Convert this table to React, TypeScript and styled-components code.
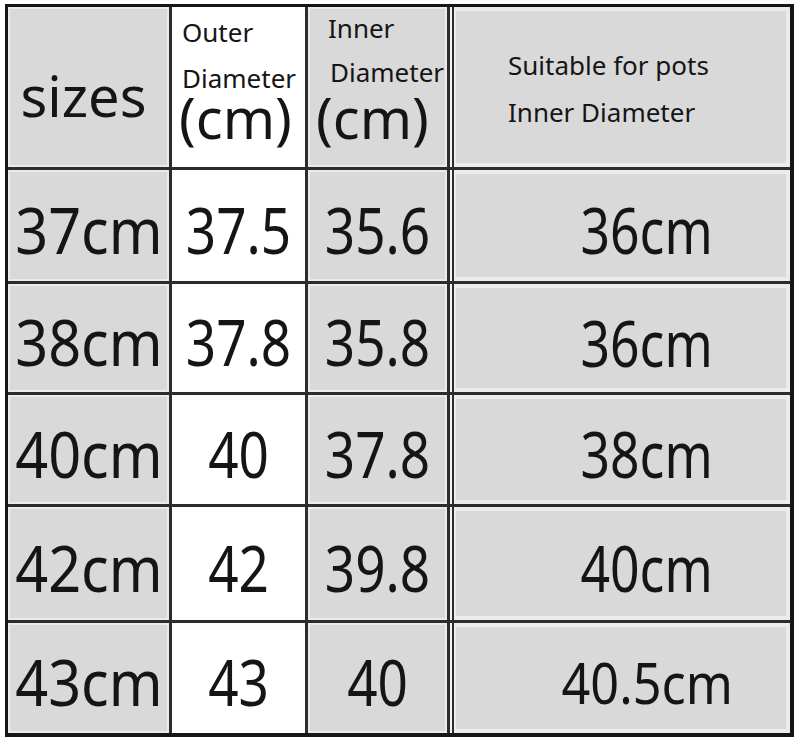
import React from "react";
import styled, { createGlobalStyle } from "styled-components";

const GlobalStyle = createGlobalStyle`
  html, body {
    margin: 0;
    padding: 0;
    background: #ffffff;
  }
  body {
    font-family: "Noto Sans", "Open Sans", sans-serif;
    color: #151515;
  }
`;

const Page = styled.div`
  width: 800px;
  height: 747px;
  box-sizing: border-box;
  padding: 4px 0 0 5px;
  overflow: hidden;
`;

const Table = styled.div`
  display: grid;
  width: 789px;
  box-sizing: border-box;
  grid-template-columns: 161px 133px 139px 1fr;
  grid-template-rows: 160px 111px 108px 109px 113px 110px;
  gap: 3px;
  background: #2c2c2c;
  border-style: solid;
  border-color: #161616;
  border-width: 3px 4px 4px 3px;
`;

type Tone = "gray" | "white";

const Cell = styled.div<{ $tone: Tone; $double?: boolean }>`
  position: relative;
  min-width: 0;
  overflow: hidden;
  background: ${(p) => (p.$tone === "white" ? "#ffffff" : "#d9d9d9")};
  border-left: ${(p) => (p.$double ? "2px solid #f2f2f2" : "0")};
  box-shadow: ${(p) =>
    p.$double
      ? "inset 2px 0 0 #2c2c2c, inset 0 0 0 4px #ececec"
      : `inset 0 0 0 2px ${p.$tone === "white" ? "#ffffff" : "#ebebeb"}`};
`;

const SizesHead = styled(Cell)`
  display: flex;
  align-items: center;
  justify-content: center;
  padding: 16px 10px 0 0;
  font-size: 56px;
  line-height: 1;
`;

const HeadStack = styled(Cell)<{ $top: number; $left: number }>`
  display: flex;
  flex-direction: column;
  align-items: flex-start;
  padding: ${(p) => p.$top}px 0 0 ${(p) => p.$left}px;
`;

const SmallLine = styled.span<{ $lh?: number; $shift?: number }>`
  font-size: 26px;
  line-height: ${(p) => p.$lh ?? 46}px;
  margin-left: ${(p) => p.$shift ?? 0}px;
  white-space: nowrap;
`;

const Unit = styled.span<{ $pull: number; $shift: number }>`
  font-size: 56px;
  line-height: 56px;
  margin: ${(p) => p.$pull}px 0 0 ${(p) => p.$shift}px;
  white-space: nowrap;
`;

const BodyCell = styled(Cell)<{ $indent?: number }>`
  display: flex;
  align-items: center;
  justify-content: center;
  padding: 8px 0 0 ${(p) => p.$indent ?? 0}px;
`;

const Value = styled.span<{ $size: number; $squeeze: number }>`
  display: inline-block;
  font-size: ${(p) => p.$size}px;
  line-height: 1;
  white-space: nowrap;
  transform: scaleX(${(p) => p.$squeeze});
`;

type Row = {
  size: string;
  outer: string;
  inner: string;
  pot: string;
  potSize?: number;
  potSqueeze?: number;
};

const rows: Row[] = [
  { size: "37cm", outer: "37.5", inner: "35.6", pot: "36cm" },
  { size: "38cm", outer: "37.8", inner: "35.8", pot: "36cm" },
  { size: "40cm", outer: "40", inner: "37.8", pot: "38cm" },
  { size: "42cm", outer: "42", inner: "39.8", pot: "40cm" },
  { size: "43cm", outer: "43", inner: "40", pot: "40.5cm", potSize: 56, potSqueeze: 0.9 },
];

export default function App() {
  return (
    <>
      <GlobalStyle />
      <Page>
        <Table>
          <SizesHead $tone="gray">sizes</SizesHead>
          <HeadStack $tone="white" $top={2} $left={10}>
            <SmallLine>Outer</SmallLine>
            <SmallLine>Diameter</SmallLine>
            <Unit $pull={-12} $shift={-3}>(cm)</Unit>
          </HeadStack>
          <HeadStack $tone="gray" $top={0} $left={20}>
            <SmallLine $lh={42}>Inner</SmallLine>
            <SmallLine $shift={2}>Diameter</SmallLine>
            <Unit $pull={-6} $shift={-12}>(cm)</Unit>
          </HeadStack>
          <HeadStack $tone="gray" $double $top={35} $left={56}>
            <SmallLine $lh={47}>Suitable for pots</SmallLine>
            <SmallLine $lh={47}>Inner Diameter</SmallLine>
          </HeadStack>

          {rows.map((r) => (
            <React.Fragment key={r.size}>
              <BodyCell $tone="gray">
                <Value $size={64} $squeeze={0.9}>{r.size}</Value>
              </BodyCell>
              <BodyCell $tone="white">
                <Value $size={64} $squeeze={0.83}>{r.outer}</Value>
              </BodyCell>
              <BodyCell $tone="gray">
                <Value $size={64} $squeeze={0.83}>{r.inner}</Value>
              </BodyCell>
              <BodyCell $tone="gray" $double $indent={52}>
                <Value $size={r.potSize ?? 63} $squeeze={r.potSqueeze ?? 0.82}>
                  {r.pot}
                </Value>
              </BodyCell>
            </React.Fragment>
          ))}
        </Table>
      </Page>
    </>
  );
}
